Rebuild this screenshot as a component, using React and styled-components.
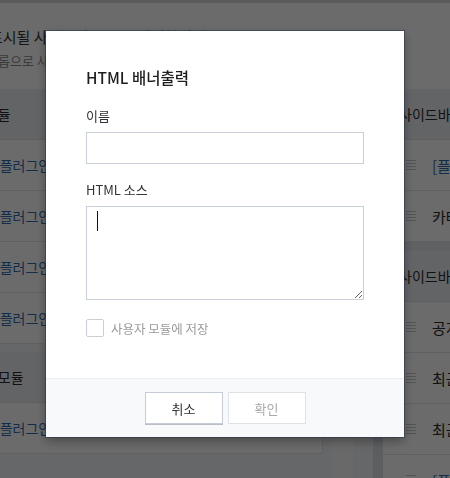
import React from "react";
import styled, { createGlobalStyle } from "styled-components";

const FONT = `"Noto Sans CJK KR", "Noto Sans", sans-serif`;

const Global = createGlobalStyle`
  html, body { margin: 0; padding: 0; background: #f4f5f7; }
  body { font-family: ${FONT}; overflow: hidden; width: 450px; height: 478px; }
  * { box-sizing: border-box; }
`;

const Page = styled.div`
  width: 450px;
  height: 478px;
  overflow: hidden;
  display: flex;
  flex-direction: column;
  background: #f4f5f7;
`;

const TopLine = styled.div`
  height: 3px;
  background: #d8d9db;
  flex: none;
`;

const Desc = styled.div`
  height: 86px;
  flex: none;
  background: #ffffff;
  padding-top: 24px;
  display: flex;
  flex-direction: column;
  gap: 4px;
  overflow: hidden;
  white-space: nowrap;
`;

const DescLine = styled.div`
  margin-left: ${(p) => p.$shift}px;
  font-size: ${(p) => (p.$sub ? 13 : 15)}px;
  line-height: 20px;
  color: ${(p) => (p.$sub ? "#8a8a8a" : "#333")};
`;

const Columns = styled.div`
  flex: 1;
  display: flex;
  align-items: flex-start;
  min-height: 0;
`;

const LeftCol = styled.div`
  flex: none;
  width: 383px;
  margin-left: -60px;
  display: flex;
  flex-direction: column;
  gap: 8px;
`;

const Panel = styled.div`
  background: #fff;
  border-right: 1px solid #dfe2e6;
  width: ${(p) => p.$w}px;
`;

const Head = styled.div`
  height: 51px;
  display: flex;
  align-items: center;
  padding-left: 16px;
  background: #eceff3;
  border-bottom: 1px solid #dfe2e6;
  font-size: 14px;
  color: #2a2a2a;
  white-space: nowrap;
`;

const Row = styled.div`
  height: 51px;
  display: flex;
  align-items: center;
  padding-left: 23px;
  border-bottom: 1px solid #e3e5e8;
  white-space: nowrap;
  font-size: ${(p) => p.$size}px;
`;

const Grip = styled.span`
  flex: none;
  width: 10px;
  height: 11px;
  margin-right: ${(p) => p.$gap}px;
  background: repeating-linear-gradient(
    to bottom,
    #c6c8cc 0 1px,
    transparent 1px 3px
  );
`;

const RowText = styled.span`
  color: ${(p) => (p.$link ? "#2f6cab" : "#2a2a2a")};
`;

const Middle = styled.div`
  flex: none;
  align-self: stretch;
  width: 60px;
  display: grid;
  grid-template-columns: 9px 21px 20px 10px;
`;

const MidCol = styled.div`
  background: ${(p) => p.$bg};
`;

const RightCol = styled.div`
  flex: none;
  width: 220px;
  display: flex;
  flex-direction: column;
  gap: 9px;
  background: #e4e7eb;
`;

const Overlay = styled.div`
  position: fixed;
  inset: 0;
  background: rgba(0, 0, 0, 0.58);
  display: flex;
  justify-content: center;
  align-items: flex-start;
  padding-top: 31px;
`;

const Modal = styled.div`
  width: 358px;
  height: 406px;
  background: #fff;
  display: flex;
  flex-direction: column;
  box-shadow: 0 0 0 1px rgba(35, 50, 75, 0.5), 0 4px 10px rgba(0, 0, 0, 0.35);
`;

const Body = styled.div`
  flex: 1;
  padding: 35px 40px 0 40px;
  display: flex;
  flex-direction: column;
`;

const Title = styled.h2`
  margin: 0 0 18px 0;
  font-size: 15.5px;
  line-height: 22px;
  font-weight: 500;
  color: #1e1e1e;
`;

const Label = styled.label`
  display: block;
  font-size: 13px;
  line-height: 19px;
  color: #333;
  margin-bottom: 7px;
`;

const Input = styled.input`
  display: block;
  width: 278px;
  height: 32px;
  margin: 0 0 16px 0;
  border: 1px solid #c9d0d8;
  border-radius: 0;
  padding: 0 10px;
  font-family: ${FONT};
  font-size: 13px;
  outline: none;
  background: #fff;
`;

const AreaWrap = styled.div`
  position: relative;
  width: 278px;
  height: 94px;
  margin-bottom: 19px;
`;

const Area = styled.textarea`
  display: block;
  width: 278px;
  height: 94px;
  margin: 0;
  border: 1px solid #c9d0d8;
  border-radius: 0;
  padding: 5px 10px;
  font-family: ${FONT};
  font-size: 13px;
  outline: none;
  resize: both;
  background: #fff;
`;

const Caret = styled.span`
  position: absolute;
  left: 11px;
  top: 5px;
  width: 1px;
  height: 20px;
  background: #111;
  pointer-events: none;
`;

const CheckRow = styled.label`
  display: flex;
  align-items: center;
  gap: 7px;
  height: 18px;
  font-size: 12.5px;
  color: #9a9a9a;
`;

const Box = styled.span`
  width: 18px;
  height: 18px;
  border: 1px solid #c8cfd8;
  border-radius: 2px;
  background: #fff;
  flex: none;
`;

const Footer = styled.div`
  height: 59px;
  flex: none;
  background: #f8f9fb;
  border-top: 1px solid #eceef2;
  display: flex;
  justify-content: center;
  align-items: center;
  gap: 5px;
`;

const Button = styled.button`
  width: 78px;
  height: 32px;
  background: #fff;
  border: 1px solid ${(p) => (p.$disabled ? "#dfe3e8" : "#c6ccd4")};
  box-shadow: ${(p) => (p.$disabled ? "none" : "0 1px 0 #b8bec6")};
  color: ${(p) => (p.$disabled ? "#a8a8a8" : "#333")};
  font-family: ${FONT};
  font-size: 13px;
  padding: 0;
  border-radius: 0;
`;

const leftPanels = [
  { head: "기본 모듈", rows: ["[플러그인] 방문자 카운터", "[플러그인] 태그 클라우드", "[플러그인] 최근 글", "[플러그인] 달력"] },
  { head: "사용자 모듈", rows: ["[플러그인] 배너 출력"] },
];

const rightPanels = [
  { head: "사이드바 1", rows: [{ t: "[플러그인] 검색", link: true }, { t: "카테고리" }] },
  { head: "사이드바 2", rows: [{ t: "공지사항" }, { t: "최근 글" }, { t: "최근 댓글" }, { t: "[플러그인] 링크", link: true }] },
];

export default function App() {
  return (
    <>
      <Global />
      <Page>
        <TopLine />
        <Desc>
          <DescLine $shift={-11}>표시될 사이드바 모듈을 설정합니다.</DescLine>
          <DescLine $sub $shift={-14}>드롭으로 사이드바 모듈의 순서를 바꿀 수 있습니다.</DescLine>
        </Desc>
        <Columns>
          <LeftCol>
            {leftPanels.map((p) => (
              <Panel key={p.head} $w={383}>
                <Head>{p.head}</Head>
                {p.rows.map((r) => (
                  <Row key={r} $size={14}>
                    <Grip $gap={22} />
                    <RowText $link>{r}</RowText>
                  </Row>
                ))}
              </Panel>
            ))}
          </LeftCol>
          <Middle>
            <MidCol $bg="#f4f5f7" />
            <MidCol $bg="#fbfbfc" />
            <MidCol $bg="#f4f5f7" />
            <MidCol $bg="#dde1e6" />
          </Middle>
          <RightCol>
            {rightPanels.map((p) => (
              <Panel key={p.head} $w={220}>
                <Head>{p.head}</Head>
                {p.rows.map((r) => (
                  <Row key={r.t} $size={15}>
                    <Grip $gap={16} />
                    <RowText $link={r.link}>{r.t}</RowText>
                  </Row>
                ))}
              </Panel>
            ))}
          </RightCol>
        </Columns>
      </Page>
      <Overlay>
        <Modal>
          <Body>
            <Title>HTML 배너출력</Title>
            <Label>이름</Label>
            <Input type="text" />
            <Label>HTML 소스</Label>
            <AreaWrap>
              <Area />
              <Caret />
            </AreaWrap>
            <CheckRow>
              <Box />
              사용자 모듈에 저장
            </CheckRow>
          </Body>
          <Footer>
            <Button>취소</Button>
            <Button $disabled>확인</Button>
          </Footer>
        </Modal>
      </Overlay>
    </>
  );
}
